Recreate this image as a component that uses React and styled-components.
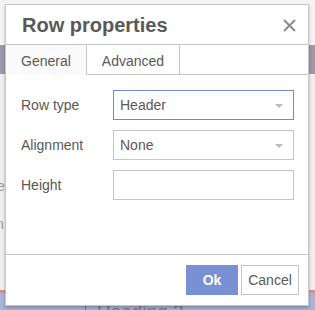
import React from "react";
import styled, { createGlobalStyle } from "styled-components";

const GlobalStyle = createGlobalStyle`
  body {
    margin: 0;
    font-family: "Liberation Sans", Arial, sans-serif;
  }
`;

export default function App() {
  return (
    <>
      <GlobalStyle />
      <Page>
        <PageTop />
        <Toolbar />
        <EditorArea>
          <GhostLine $top={104} $shift={-3}>e</GhostLine>
          <GhostLine $top={22} $shift={-4}>n</GhostLine>
        </EditorArea>
        <StatusLine />
        <BlueArea>
          <Caret />
          <BlueText>Heading 2</BlueText>
        </BlueArea>

        <Dialog>
          <Header>
            <Title>Row properties</Title>
            <CloseButton type="button" aria-label="Close">
              <svg width="13" height="13" viewBox="0 0 13 13">
                <path d="M1 1 L12 12 M12 1 L1 12" stroke="#8c8c8c" strokeWidth="2" />
              </svg>
            </CloseButton>
          </Header>

          <TabBar>
            <Tab $active>General</Tab>
            <Tab>Advanced</Tab>
            <TabFill />
          </TabBar>

          <Body>
            <FieldRow>
              <Label>Row type</Label>
              <Select $focused>
                Header
                <Arrow />
              </Select>
            </FieldRow>
            <FieldRow>
              <Label>Alignment</Label>
              <Select>
                None
                <Arrow />
              </Select>
            </FieldRow>
            <FieldRow>
              <Label>Height</Label>
              <TextInput />
            </FieldRow>
          </Body>

          <Footer>
            <Button $primary type="button">Ok</Button>
            <Button type="button">Cancel</Button>
          </Footer>
        </Dialog>
      </Page>
    </>
  );
}

const Page = styled.div`
  position: relative;
  width: 315px;
  height: 310px;
  overflow: hidden;
  display: flex;
  flex-direction: column;
  background: #f2f2f2;
`;

const PageTop = styled.div`
  height: 45px;
  background: #f4f4f4;
`;

const Toolbar = styled.div`
  height: 29px;
  background: #9b99a7;
`;

const EditorArea = styled.div`
  flex: 1;
  background: #efefef;
  overflow: hidden;
`;

const GhostLine = styled.div`
  margin-top: ${(p) => p.$top}px;
  margin-left: ${(p) => p.$shift}px;
  font-size: 14px;
  line-height: 16px;
  color: #9a9a9a;
  white-space: nowrap;
`;

const StatusLine = styled.div`
  height: 3px;
  background: #d98b90;
`;

const BlueArea = styled.div`
  height: 17px;
  background: #a8b4dc;
  display: flex;
  align-items: flex-start;
  padding-left: 85px;
`;

const Caret = styled.div`
  width: 1px;
  height: 17px;
  margin-top: 9px;
  background: #777;
`;

const BlueText = styled.div`
  margin-left: 11px;
  margin-top: 9px;
  font-size: 19px;
  color: #7d7f8c;
  line-height: 1;
`;

const Dialog = styled.div`
  position: absolute;
  left: 5px;
  top: 4px;
  width: 302px;
  height: 300px;
  background: #fff;
  border: 1px solid #c5c5c5;
  box-shadow: 0 2px 3px rgba(0, 0, 0, 0.25);
  display: flex;
  flex-direction: column;
`;

const Header = styled.div`
  height: 38px;
  border-bottom: 1px solid #c5c5c5;
  display: flex;
  align-items: center;
  justify-content: space-between;
  padding: 1px 12px 0 16px;
`;

const Title = styled.div`
  font-size: 20px;
  font-weight: bold;
  color: #595959;
`;

const CloseButton = styled.button`
  border: 0;
  background: none;
  padding: 0;
  width: 13px;
  height: 13px;
  display: flex;
  cursor: pointer;
`;

const TabBar = styled.div`
  display: flex;
  height: 30px;
`;

const Tab = styled.div`
  padding: 8px 15px 5px;
  font-size: 14px;
  line-height: 16px;
  color: #595959;
  background: ${(p) => (p.$active ? "#fafafa" : "#fff")};
  border-right: 1px solid #c5c5c5;
  border-bottom: 1px solid ${(p) => (p.$active ? "transparent" : "#c5c5c5")};
`;

const TabFill = styled.div`
  flex: 1;
  border-bottom: 1px solid #c5c5c5;
`;

const Body = styled.div`
  flex: 1;
  padding: 15px 14px 0 15px;
  display: flex;
  flex-direction: column;
  gap: 10px;
`;

const FieldRow = styled.div`
  display: flex;
  align-items: center;
  height: 30px;
`;

const Label = styled.div`
  width: 92px;
  font-size: 14px;
  color: #595959;
`;

const Select = styled.div`
  position: relative;
  box-sizing: border-box;
  width: 181px;
  height: 30px;
  padding: 0 6px;
  display: flex;
  align-items: center;
  font-size: 14px;
  color: #595959;
  border: 1px solid ${(p) => (p.$focused ? "#7089d3" : "#c5c5c5")};
`;

const Arrow = styled.span`
  position: absolute;
  right: 10px;
  top: 13px;
  width: 0;
  height: 0;
  border-left: 4px solid transparent;
  border-right: 4px solid transparent;
  border-top: 4px solid #bbb;
`;

const TextInput = styled.div`
  box-sizing: border-box;
  width: 181px;
  height: 30px;
  border: 1px solid #c5c5c5;
`;

const Footer = styled.div`
  height: 50px;
  border-top: 1px solid #c5c5c5;
  display: flex;
  align-items: center;
  justify-content: flex-end;
  gap: 3px;
  padding-right: 9px;
`;

const Button = styled.button`
  box-sizing: border-box;
  height: 30px;
  width: ${(p) => (p.$primary ? "52px" : "58px")};
  padding: 0;
  font-family: "Liberation Sans", Arial, sans-serif;
  font-size: 14px;
  font-weight: ${(p) => (p.$primary ? "bold" : "normal")};
  color: ${(p) => (p.$primary ? "#fff" : "#595959")};
  background: ${(p) => (p.$primary ? "#7990d4" : "#fff")};
  border: 1px solid ${(p) => (p.$primary ? "#7990d4" : "#c5c5c5")};
  cursor: pointer;
`;
